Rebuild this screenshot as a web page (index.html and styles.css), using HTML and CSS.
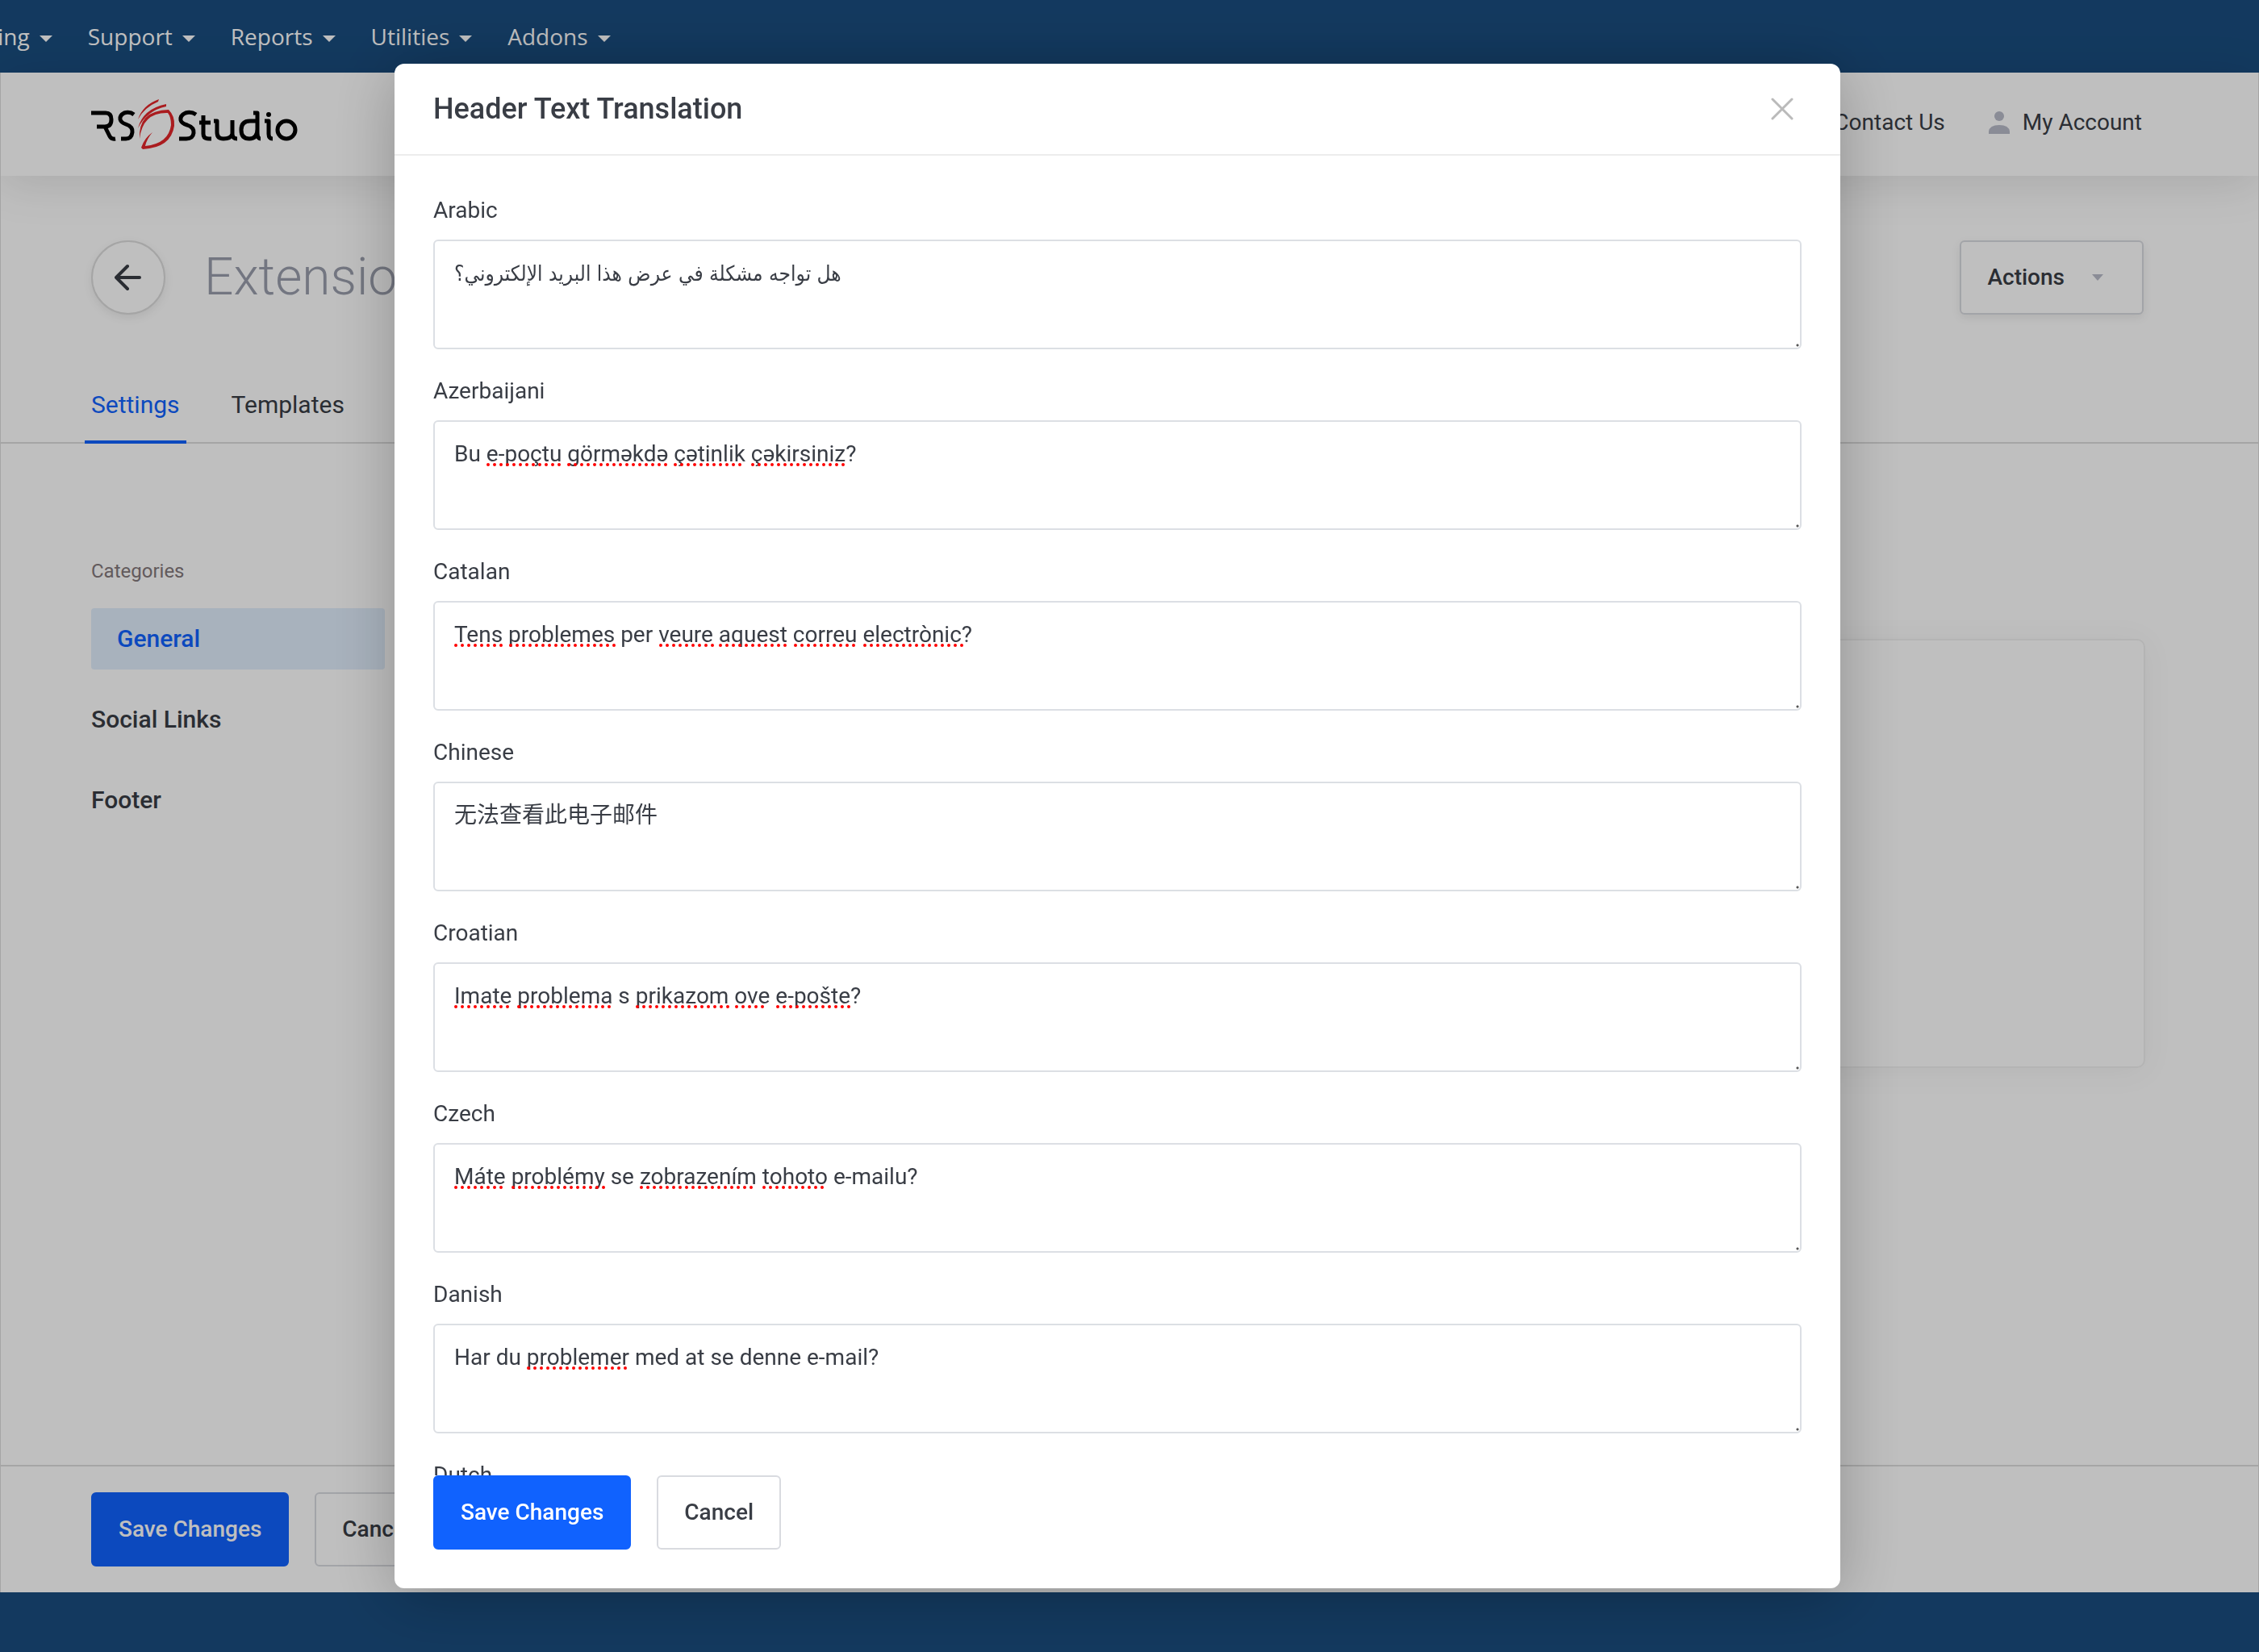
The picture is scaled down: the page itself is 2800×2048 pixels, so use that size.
FILE: index.html
```html
<!DOCTYPE html>
<html lang="en">
<head>
<meta charset="utf-8">
<title>Header Text Translation</title>
<link rel="stylesheet" href="styles.css">
</head>
<body>
<div class="page">
  <nav class="topnav">
    <a href="#" class="topnav-link">Billing<span class="caret"></span></a>
    <a href="#" class="topnav-link">Support<span class="caret"></span></a>
    <a href="#" class="topnav-link">Reports<span class="caret"></span></a>
    <a href="#" class="topnav-link">Utilities<span class="caret"></span></a>
    <a href="#" class="topnav-link">Addons<span class="caret"></span></a>
  </nav>
  <header class="header">
    <a href="#" class="logo" aria-label="RS Studio">
      <svg width="256" height="64" viewBox="0 0 256 64" fill="none">
        <g stroke="#000" stroke-width="5" stroke-linejoin="round">
          <path d="M0 18H18Q25 18 25 26Q25 35 17 35H7M17 35L23 47Q25 51 30 50"/>
          <path d="M53 20Q48 16 41 18Q35 21 36 26Q37 30 43 32Q52 35 51 42Q50 50 43 50H37"/>
          <path d="M130 20Q124 16 117 18Q110 21 111 27Q112 31 119 33Q128 36 127 43Q126 50 118 50H109"/>
          <path d="M139 21V44Q139 50 146 50H149M134 30H148"/>
          <path d="M152 28H156V42Q156 50 164 50Q173 50 175 44V27M175 44Q175 50 181 50"/>
          <path d="M206 43V18H201M206 38Q206 50 196 50Q186 50 186 39Q186 28 197 28H206M206 42Q206 50 210 50"/>
          <path d="M215 28H220V44Q220 50 225 50"/>
          <circle cx="242" cy="39" r="11"/>
        </g>
        <circle cx="220" cy="20" r="3" fill="#000"/>
        <g fill="#e3262a">
          <path d="M58 26Q64 8 84 1L83 4Q66 11 58 26Z"/>
          <path d="M58 37Q64 13 93 7V10Q69 15 58 37Z"/>
          <path d="M60 50Q58 15 96 14Q104 22 103 34Q99 61 64 63L62 61Q66 49 76 42Q69 50 67 59Q96 56 99 33Q99 23 95 18Q64 17 60 50Z"/>
        </g>
      </svg>
    </a>
    <div class="header-links">
      <a href="#" class="header-link">Contact Us</a>
      <a href="#" class="header-link">
        <svg width="26" height="28" viewBox="0 0 26 28" fill="#b8bbc9"><circle cx="13" cy="6" r="6"/><path d="M0 28V25Q1 17 13 17Q25 17 26 25V28Z"/></svg>
        My Account
      </a>
    </div>
  </header>
  <main class="content">
    <div class="title-row">
      <button class="back" aria-label="Back">
        <svg width="34" height="34" viewBox="0 0 34 34" fill="none" stroke="#393d45" stroke-width="4" stroke-linecap="round" stroke-linejoin="round"><path d="M31 17H2M16 3L2 17L16 31"/></svg>
      </button>
      <h1 class="title">Extensions</h1>
      <button class="btn btn-actions">Actions<span class="caret caret-small"></span></button>
    </div>
    <div class="tabs">
      <a href="#" class="tab tab-active">Settings</a>
      <a href="#" class="tab">Templates</a>
    </div>
    <div class="columns">
      <aside class="sidebar">
        <div class="sidebar-title">Categories</div>
        <a href="#" class="side-link side-link-active">General</a>
        <a href="#" class="side-link">Social Links</a>
        <a href="#" class="side-link">Footer</a>
      </aside>
      <section class="panel"></section>
    </div>
  </main>
  <div class="page-actions">
    <button class="btn btn-primary">Save Changes</button>
    <button class="btn">Cancel</button>
  </div>
  <footer class="bottom-bar"></footer>
</div>

<div class="overlay">
  <div class="modal" role="dialog" aria-labelledby="modal-title">
    <div class="modal-header">
      <h2 id="modal-title" class="modal-title">Header Text Translation</h2>
      <button class="close" aria-label="Close">
        <svg width="28" height="28" viewBox="0 0 28 28" stroke="#bababa" stroke-width="3" stroke-linecap="round"><path d="M2 2L26 26M26 2L2 26"/></svg>
      </button>
    </div>
    <form class="modal-body">
      <div class="field">
        <label for="t-ar">Arabic</label>
        <div class="box"><textarea id="t-ar" class="arabic" spellcheck="false">هل تواجه مشكلة في عرض هذا البريد الإلكتروني؟</textarea></div>
      </div>
      <div class="field">
        <label for="t-az">Azerbaijani</label>
        <div class="box"><textarea id="t-az" spellcheck="false">Bu e-poçtu görməkdə çətinlik çəkirsiniz?</textarea>
          <svg class="marks"><path d="M42 2H134M142 2H266M274 2H362M370 2H487"/></svg></div>
      </div>
      <div class="field">
        <label for="t-ca">Catalan</label>
        <div class="box"><textarea id="t-ca" spellcheck="false">Tens problemes per veure aquest correu electrònic?</textarea>
          <svg class="marks"><path d="M2 2H60M70 2H200M256 2H321M330 2H412M423 2H501M509 2H630"/></svg></div>
      </div>
      <div class="field">
        <label for="t-zh">Chinese</label>
        <div class="box"><textarea id="t-zh" spellcheck="false">无法查看此电子邮件</textarea></div>
      </div>
      <div class="field">
        <label for="t-hr">Croatian</label>
        <div class="box"><textarea id="t-hr" spellcheck="false">Imate problema s prikazom ove e-pošte?</textarea>
          <svg class="marks"><path d="M2 2H71M80 2H196M227 2H340M350 2H390M401 2H492"/></svg></div>
      </div>
      <div class="field">
        <label for="t-cs">Czech</label>
        <div class="box"><textarea id="t-cs" spellcheck="false">Máte problémy se zobrazením tohoto e-mailu?</textarea>
          <svg class="marks"><path d="M2 2H63M73 2H186M232 2H374M384 2H462"/></svg></div>
      </div>
      <div class="field">
        <label for="t-da">Danish</label>
        <div class="box"><textarea id="t-da" spellcheck="false">Har du problemer med at se denne e-mail?</textarea>
          <svg class="marks"><path d="M92 2H217"/></svg></div>
      </div>
      <div class="field">
        <label for="t-nl">Dutch</label>
        <div class="box"><textarea id="t-nl" spellcheck="false"></textarea></div>
      </div>
    </form>
    <div class="modal-footer">
      <button class="btn btn-primary">Save Changes</button>
      <button class="btn">Cancel</button>
    </div>
  </div>
</div>
</body>
</html>
```

FILE: styles.css
```css
* { box-sizing: border-box; }

body {
  margin: 0;
  font-family: Roboto, "Noto Sans CJK SC", sans-serif;
  font-size: 28px;
  line-height: 40px;
  color: #393d45;
  overflow: hidden;
}

a { color: inherit; text-decoration: none; }
button, textarea { font: inherit; color: inherit; }

.page {
  display: flex;
  flex-direction: column;
  height: 100vh;
  background: #fff;
}

.topnav {
  display: flex;
  align-items: center;
  gap: 44px;
  flex: none;
  height: 90px;
  margin-left: -42px;
  background: #1a4d7f;
  font-family: "Open Sans", sans-serif;
  color: #fff;
}
.topnav-link { display: flex; align-items: center; gap: 12px; }

.caret {
  border: 8px solid transparent;
  border-top-color: currentColor;
  border-bottom: 0;
  margin-top: 6px;
}
.caret-small { border-width: 8px 7px 0; color: #b8bbc9; margin-top: 0; }

.header {
  display: flex;
  justify-content: space-between;
  align-items: center;
  flex: none;
  height: 128px;
  padding: 0 144px 0 112px;
  box-shadow: 0 8px 60px rgba(0, 0, 0, .12);
}
.header, .content, .page-actions {
  border-left: 1px solid #dcdcdc;
  border-right: 1px solid #dcdcdc;
}
.logo { display: flex; }
.header-links { display: flex; align-items: center; gap: 54px; padding-bottom: 4px; }
.header-link { display: flex; align-items: center; gap: 16px; }

.content { flex: 1; min-height: 0; }
.title-row {
  display: flex;
  align-items: center;
  gap: 48px;
  padding: 80px 142px 0 112px;
}
.back {
  display: flex;
  align-items: center;
  justify-content: center;
  width: 92px;
  height: 92px;
  border: 2px solid #dcdcdc;
  border-radius: 50%;
  background: #fff;
  box-shadow: 0 4px 12px rgba(0, 0, 0, .08);
}
.title {
  flex: 1;
  margin: 0;
  font-size: 64px;
  line-height: 80px;
  font-weight: 300;
  color: #9a9eac;
}

.btn {
  height: 92px;
  padding: 0 32px;
  border: 2px solid #d9dbe0;
  border-radius: 6px;
  background: #fff;
  font-weight: 500;
}
.btn-primary { border-color: #1062fe; background: #1062fe; color: #fff; }
.btn-actions {
  display: flex;
  align-items: center;
  gap: 34px;
  padding-right: 48px;
  box-shadow: 0 4px 12px rgba(0, 0, 0, .08);
}

.tabs {
  display: flex;
  gap: 48px;
  margin-top: 64px;
  padding: 0 104px;
  border-bottom: 2px solid #dcdcdc;
  font-size: 30px;
}
.tab {
  height: 96px;
  margin-bottom: -2px;
  padding: 28px 8px 0;
  border-bottom: 4px solid transparent;
}
.tab-active { border-color: #1062fe; color: #1062fe; }

.columns {
  display: flex;
  gap: 64px;
  padding: 0 140px 0 112px;
}
.sidebar {
  display: flex;
  flex-direction: column;
  gap: 24px;
  width: 364px;
  padding-top: 138px;
  font-weight: 500;
}
.sidebar-title { margin-bottom: 2px; font-size: 24px; font-weight: 400; color: #83787b; }
.side-link { padding: 18px 0; font-size: 30px; }
.side-link-active { padding: 18px 32px; border-radius: 4px; background: #e1eefc; color: #1062fe; }
.panel {
  flex: 1;
  height: 532px;
  margin-top: 242px;
  border: 2px solid #f0f0f0;
  border-radius: 10px;
  box-shadow: 0 4px 40px rgba(0, 0, 0, .05);
}

.page-actions {
  display: flex;
  gap: 32px;
  flex: none;
  padding: 32px 112px;
  border-top: 2px solid #dcdcdc;
}
.bottom-bar { flex: none; height: 74px; background: #1a4d7f; }

.overlay {
  position: fixed;
  inset: 0;
  display: flex;
  justify-content: center;
  padding: 79px 30px 79px 0;
  background: rgba(0, 0, 0, .25);
}
.modal {
  display: flex;
  flex-direction: column;
  width: 1792px;
  max-width: 100%;
  border-radius: 12px;
  background: #fff;
  box-shadow: 0 10px 80px rgba(0, 0, 0, .25);
}
.modal-header {
  display: flex;
  align-items: center;
  justify-content: space-between;
  flex: none;
  height: 114px;
  padding: 0 58px 0 48px;
  border-bottom: 2px solid #ececec;
}
.modal-title { margin: 0; font-size: 36px; font-weight: 500; }
.close { display: flex; padding: 0; border: 0; background: none; }

.modal-body {
  flex: 1;
  min-height: 0;
  padding: 48px 48px 0;
  overflow: hidden;
}
.field { margin-bottom: 32px; }
.field label { display: block; margin-bottom: 16px; }
.box { position: relative; }
textarea {
  display: block;
  width: 100%;
  height: 136px;
  padding: 20px 24px;
  border: 2px solid #dcdfe4;
  border-radius: 6px;
  background: #fff;
  resize: vertical;
  overflow: hidden;
}
textarea::-webkit-resizer {
  background: radial-gradient(circle at 12px 12px, #555 1px, transparent 2px);
}
.arabic { font-family: "DejaVu Sans Condensed", "DejaVu Sans", sans-serif; font-size: 26px; }

/* dotted spell-check marks under the words */
.marks {
  position: absolute;
  left: 26px;
  top: 53px;
  width: 700px;
  height: 4px;
  fill: none;
  stroke: #f00;
  stroke-width: 4px;
  stroke-linecap: round;
  stroke-dasharray: 0 8;
  pointer-events: none;
}

.modal-footer {
  display: flex;
  gap: 32px;
  flex: none;
  padding: 0 48px 48px;
}
```
